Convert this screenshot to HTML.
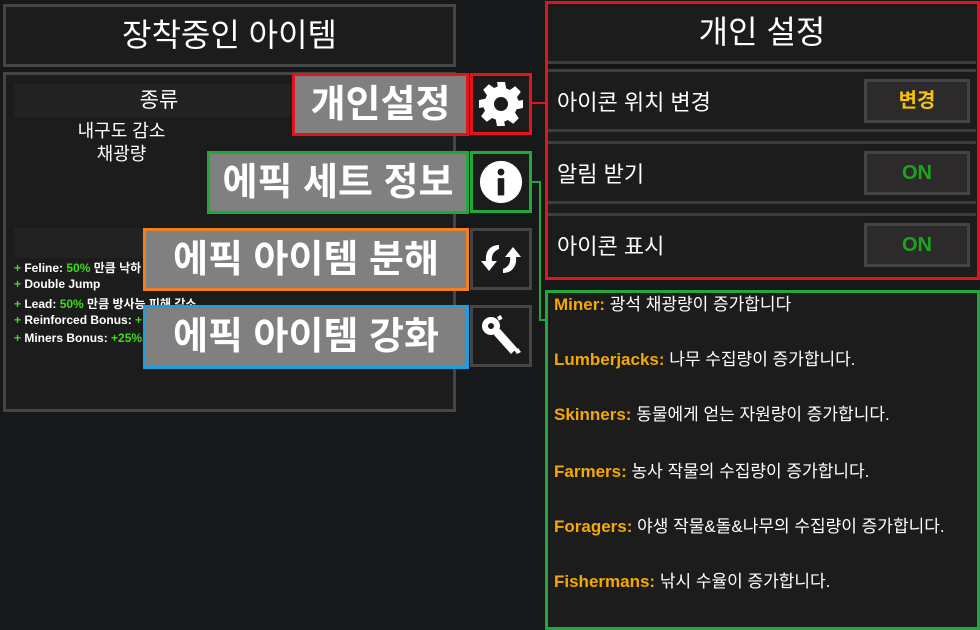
<!DOCTYPE html>
<html><head><meta charset="utf-8"><style>
*{margin:0;padding:0;box-sizing:border-box}
body{width:980px;height:630px;background:#17181a;position:relative;overflow:hidden;font-family:"Liberation Sans","Noto Sans CJK KR",sans-serif;color:#fff}
.a{position:absolute}
.box{position:absolute;border:3px solid #454545;background:#1c1c1c}
.lbl{position:absolute;background:#808080;border:3px solid;color:#fff;font-weight:bold;font-size:38px;line-height:1;display:flex;align-items:center;justify-content:center;white-space:nowrap}
.ic{position:absolute;width:62px;height:62px;border:3px solid #454545;background:#1c1c1c;display:flex;align-items:center;justify-content:center}
.row{position:absolute;left:548px;width:428px;height:63px;background:#1c1c1c;border-top:3px solid #3e3e3e;border-bottom:3px solid #3e3e3e;font-size:22px;padding-left:9px;line-height:62px}
.btn{position:absolute;right:6px;top:7px;width:106px;height:44px;border:3px solid #444;background:#2c2a2a;text-align:center;line-height:38px;font-size:20px;font-weight:bold}
.gl{position:absolute;left:554px;font-size:17px;line-height:20px;white-space:nowrap}
.gl b{color:#f5a800}
.sm{position:absolute;left:14px;font-size:12px;font-weight:bold}
.sm i{font-style:normal;color:#3ddc1a}
</style></head><body>
<div class="box" style="left:3px;top:4px;width:453px;height:63px;text-align:center;font-size:32px;line-height:57px">장착중인 아이템</div>
<div class="box" style="left:3px;top:72px;width:453px;height:340px"></div>
<div class="a" style="left:14px;top:84px;width:290px;height:33px;background:#222;text-align:center;font-size:21px;line-height:33px">종류</div>
<div class="a" style="left:14px;top:120px;width:215px;text-align:center;font-size:18px;line-height:23px">내구도 감소<br>채광량</div>
<div class="a" style="left:14px;top:228px;width:290px;height:30px;background:#222"></div>
<div class="sm" style="top:259px"><i>+</i> Feline: <i>50%</i> 만큼 낙하</div>
<div class="sm" style="top:277px"><i>+</i> Double Jump</div>
<div class="sm" style="top:295px"><i>+</i> Lead: <i>50%</i> 만큼 방사능 피해 감소.</div>
<div class="sm" style="top:313px"><i>+</i> Reinforced Bonus: <i>+</i></div>
<div class="sm" style="top:331px"><i>+</i> Miners Bonus: <i>+25%</i></div>

<div class="lbl" style="left:292px;top:73px;width:177px;height:63px;border-color:#e3141c">개인설정</div>
<div class="ic" style="left:470px;top:73px;border-color:#e3141c"><svg width="48" height="48" viewBox="0 0 24 24"><path fill="#fff" d="M10 1h4l.6 3.2 1.8.8 2.7-1.9 2.8 2.8-1.9 2.7.8 1.8L23 10v4l-3.2.6-.8 1.8 1.9 2.7-2.8 2.8-2.7-1.9-1.8.8L14 23h-4l-.6-3.2-1.8-.8-2.7 1.9-2.8-2.8 1.9-2.7-.8-1.8L1 14v-4l3.2-.6.8-1.8-1.9-2.7 2.8-2.8 2.7 1.9 1.8-.8z"/><circle cx="12" cy="12" r="3.5" fill="#1c1c1c"/></svg></div>
<div class="lbl" style="left:207px;top:151px;width:262px;height:63px;border-color:#22a83a">에픽 세트 정보</div>
<div class="ic" style="left:470px;top:151px;border-color:#22a83a"><svg width="46" height="46" viewBox="0 0 24 24"><circle cx="12" cy="12" r="11" fill="#fff"/><circle cx="12" cy="6.8" r="1.8" fill="#1c1c1c"/><rect x="10.3" y="10" width="3.4" height="9" fill="#1c1c1c"/></svg></div>
<div class="lbl" style="left:143px;top:228px;width:326px;height:63px;border-color:#f57f1f">에픽 아이템 분해</div>
<div class="ic" style="left:470px;top:228px"><svg width="48" height="48" viewBox="0 0 24 24" fill="#fff"><path d="M11 5C6 5 4 9 4.5 13H2l4 5 4-5H7.5C7 10 8.5 8 11 7z"/><path d="M13 19c5 0 7-4 6.5-8H22l-4-5-4 5h2.5c.5 3-1 5-3.5 6z"/></svg></div>
<div class="lbl" style="left:143px;top:305px;width:326px;height:64px;border-color:#1e9ce0">에픽 아이템 강화</div>
<div class="ic" style="left:470px;top:305px"><svg width="48" height="48" viewBox="0 0 24 24" fill="#fff"><circle cx="7" cy="7" r="4.5"/><circle cx="7" cy="7" r="1.5" fill="#1c1c1c"/><path d="M8.5 11.5l3-3 8.5 9.5-3 3z"/><path d="M10 2.5l1.8-1 1 1.8-1.8 1z"/><path d="M18.5 19l2-1 1.5 2-2 1z"/></svg></div>

<div class="a" style="left:532px;top:102px;width:14px;height:2px;background:#e3141c"></div>
<div class="a" style="left:532px;top:181px;width:9px;height:2px;background:#22a83a"></div>
<div class="a" style="left:539px;top:181px;width:2px;height:140px;background:#22a83a"></div>
<div class="a" style="left:539px;top:319px;width:8px;height:2px;background:#22a83a"></div>

<div class="a" style="left:545px;top:1px;width:435px;height:279px;border:3px solid #e3141c;background:#1c1c1c"></div>
<div class="a" style="left:548px;top:6px;width:428px;text-align:center;font-size:32px;line-height:52px">개인 설정</div>
<div class="a" style="left:548px;top:61px;width:428px;height:10px;background:#141414;border-top:3px solid #3e3e3e"></div>
<div class="row" style="top:69px">아이콘 위치 변경<div class="btn" style="color:#f4c20d">변경</div></div>
<div class="row" style="top:141px">알림 받기<div class="btn" style="color:#1aa51a">ON</div></div>
<div class="row" style="top:213px;border-bottom:none">아이콘 표시<div class="btn" style="color:#1aa51a">ON</div></div>

<div class="a" style="left:545px;top:290px;width:435px;height:340px;border:3px solid #22a83a;background:#1c1c1c"></div>
<div class="gl" style="top:295px"><b>Miner:</b> 광석 채광량이 증가합니다</div>
<div class="gl" style="top:350px"><b>Lumberjacks:</b> 나무 수집량이 증가합니다.</div>
<div class="gl" style="top:405px"><b>Skinners:</b> 동물에게 얻는 자원량이 증가합니다.</div>
<div class="gl" style="top:462px"><b>Farmers:</b> 농사 작물의 수집량이 증가합니다.</div>
<div class="gl" style="top:517px"><b>Foragers:</b> 야생 작물&amp;돌&amp;나무의 수집량이 증가합니다.</div>
<div class="gl" style="top:572px"><b>Fishermans:</b> 낚시 수율이 증가합니다.</div>
</body></html>
